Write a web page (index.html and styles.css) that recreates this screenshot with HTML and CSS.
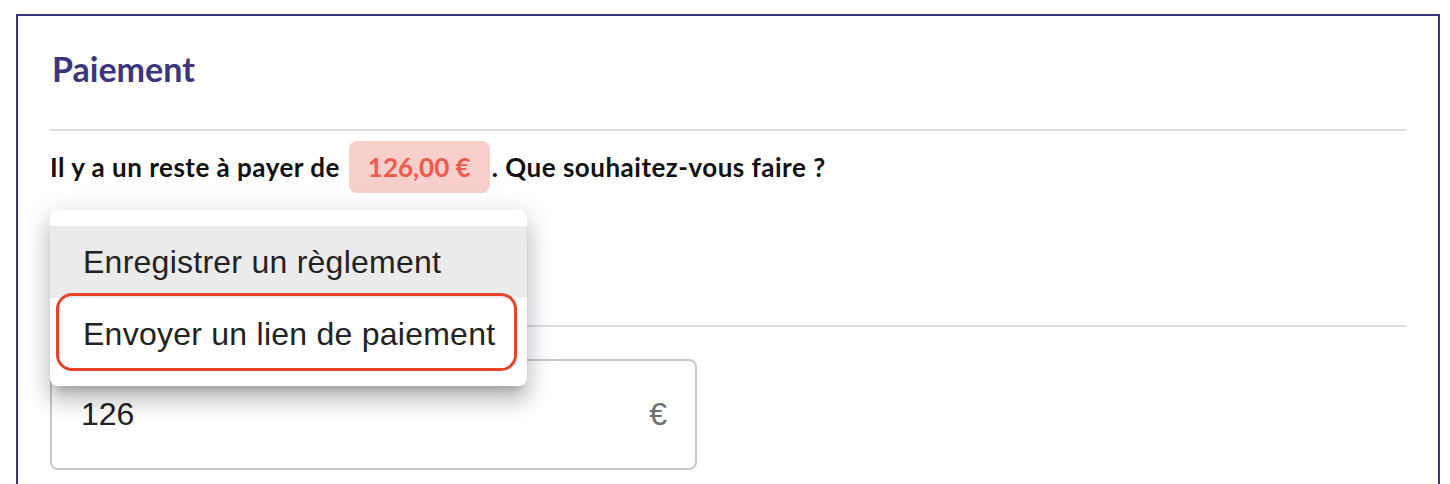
FILE: index.html
```html
<!DOCTYPE html>
<html lang="fr">
<head>
<meta charset="utf-8">
<title>Paiement</title>
<link rel="stylesheet" href="styles.css">
</head>
<body>
<section class="card">
  <h2 class="title">Paiement</h2>
  <hr class="sep">
  <p class="remaining">Il y a un reste à payer de <span class="badge">126,00 €</span>. Que souhaitez-vous faire ?</p>
  <div class="choice"></div>
  <hr class="sep">
  <div class="field">
    <span class="field-value">126</span>
    <span class="field-unit">€</span>
  </div>
  <ul class="menu">
    <li class="menu-item is-hover">Enregistrer un règlement</li>
    <li class="menu-item is-focus">Envoyer un lien de paiement</li>
  </ul>
</section>
</body>
</html>
```

FILE: styles.css
```css
* { box-sizing: border-box; }
html, body { margin: 0; padding: 0; background: #ffffff; }
body { overflow: hidden; height: 484px; }

.card {
  position: relative;
  margin: 14px 10px 0 16px;
  border: 2px solid #3a3479;
  border-bottom: 0;
  padding: 33px 32px 40px;
  min-height: 500px;
  font-family: Lato, "Noto Sans", sans-serif;
}

.title {
  margin: 0;
  padding-left: 2px;
  font-size: 34px;
  line-height: 40px;
  font-weight: 700;
  color: #3b3580;
}

.sep {
  margin: 40px 0 0;
  border: 0;
  height: 2px;
  background: #dddddd;
}

.remaining {
  margin: 10px 0 0;
  display: flex;
  align-items: center;
  font-size: 26px;
  letter-spacing: 0.5px;
  font-weight: 700;
  color: #111111;
  white-space: pre;
}

.badge {
  display: inline-flex;
  align-items: center;
  height: 52px;
  padding: 0 19px;
  margin: 0 2px 0 2px;
  border-radius: 8px;
  background: #f9cfcb;
  color: #ee5a4b;
  letter-spacing: 0;
}

.choice { height: 132px; }

.choice + .sep { margin-top: 0; }

.field {
  margin-top: 32px;
  width: 647px;
  height: 111px;
  border: 2px solid #c9c9c9;
  border-radius: 8px;
  display: flex;
  align-items: center;
  justify-content: space-between;
  padding: 0 28px 0 29px;
  font-family: "Liberation Sans", Arial, sans-serif;
  font-size: 32px;
}

.field-value { color: #222222; }
.field-unit { color: #6f6f6f; }

.menu {
  position: absolute;
  left: 32px;
  top: 194px;
  width: 477px;
  margin: 0;
  padding: 16px 0;
  list-style: none;
  background: #ffffff;
  border-radius: 8px;
  box-shadow: 0 10px 10px -6px rgba(0,0,0,0.2), 0 16px 20px 2px rgba(0,0,0,0.14), 0 6px 28px 4px rgba(0,0,0,0.12);
  font-family: "Liberation Sans", Arial, sans-serif;
  font-size: 32px;
  letter-spacing: 0.25px;
  color: #222222;
}

.menu-item {
  position: relative;
  height: 72px;
  display: flex;
  align-items: center;
  padding: 0 0 0 33px;
  white-space: nowrap;
}

.menu-item.is-hover { background: #ebebeb; }

.menu-item.is-focus::after {
  content: "";
  position: absolute;
  left: 6px;
  right: 10px;
  top: -5px;
  bottom: -1px;
  border: 3px solid #e8432a;
  border-radius: 16px;
}
```
